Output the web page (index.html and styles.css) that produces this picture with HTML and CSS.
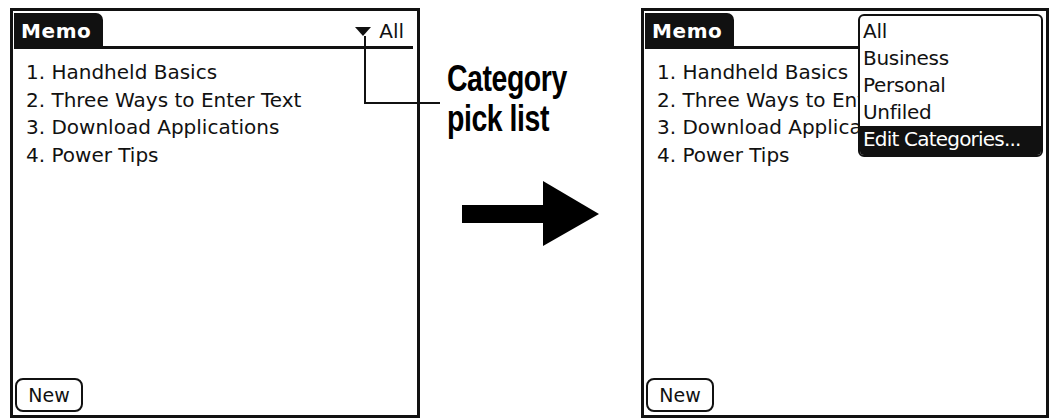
FILE: index.html
```html
<!DOCTYPE html>
<html lang="en">
<head>
<meta charset="utf-8">
<title>Memo category pick list</title>
<link rel="stylesheet" href="styles.css">
</head>
<body>
<div class="stage">
  <section class="screen screen-left">
    <header class="titlebar">
      <div class="tab">Memo</div>
      <div class="cat">
        <svg class="tri" width="16" height="9" viewBox="0 0 16 9"><polygon points="0,0 16,0 8,9"/></svg>
        <span>All</span>
      </div>
    </header>
    <ul class="memos">
      <li>1. Handheld Basics</li>
      <li>2. Three Ways to Enter Text</li>
      <li>3. Download Applications</li>
      <li>4. Power Tips</li>
    </ul>
    <div class="actions"><button class="btn">New</button></div>
  </section>

  <div class="middle">
    <p class="callout"><span class="callout-line">Category</span><span class="callout-line">pick list</span></p>
    <svg class="arrow" width="137" height="65" viewBox="0 0 137 65"><rect x="0" y="24" width="82" height="18"/><polygon points="81,0 137,33 81,65"/></svg>
  </div>

  <section class="screen screen-right">
    <header class="titlebar">
      <div class="tab">Memo</div>
    </header>
    <ul class="memos">
      <li>1. Handheld Basics</li>
      <li>2. Three Ways to Enter Text</li>
      <li>3. Download Applications</li>
      <li>4. Power Tips</li>
    </ul>
    <div class="actions"><button class="btn">New</button></div>
    <ul class="menu">
      <li>All</li>
      <li>Business</li>
      <li>Personal</li>
      <li>Unfiled</li>
      <li class="edit">Edit Categories...</li>
    </ul>
  </section>

  <div class="leader"></div>
</div>
</body>
</html>
```
FILE: styles.css
```css
* { box-sizing: border-box; }

body {
  margin: 0;
  background: #fff;
  font-family: "DejaVu Sans", "Noto Sans", sans-serif;
  color: #111;
}

.stage {
  position: relative;
  display: flex;
  align-items: flex-start;
  width: 1054px;
  height: 420px;
  padding: 8px 0 0 10px;
  overflow: hidden;
}

.screen {
  position: relative;
  display: flex;
  flex-direction: column;
  height: 410px;
  border: 3px solid #111;
  background: #fff;
}

.screen-left { width: 410px; }
.screen-right { width: 408px; }

.titlebar {
  display: flex;
  align-items: flex-start;
  height: 36px;
  margin: 2px 4px 0 1px;
  border-bottom: 3px solid #111;
}

.tab {
  width: 89px;
  height: 33px;
  padding: 4px 0 0 7px;
  background: #111;
  color: #fff;
  font-weight: bold;
  font-size: 20px;
  line-height: 28px;
  letter-spacing: 0.6px;
  border-top-right-radius: 7px;
}

.cat {
  display: flex;
  align-items: center;
  gap: 8px;
  height: 20px;
  margin: 8px 9px 0 auto;
  font-size: 20px;
  line-height: 20px;
}

.tri { fill: #111; display: block; }

.memos {
  flex: 1;
  list-style: none;
  margin: 0;
  padding: 10px 0 0 13px;
  font-size: 20px;
  line-height: 27.7px;
  white-space: nowrap;
}

.actions { padding: 0 0 3px 2px; }

.btn {
  width: 68px;
  height: 34px;
  padding: 0;
  border: 2px solid #111;
  border-radius: 8px;
  background: #fff;
  color: #111;
  font-family: "DejaVu Sans", sans-serif;
  font-size: 19px;
  line-height: 30px;
}

.middle {
  display: flex;
  flex-direction: column;
  width: 221px;
  padding: 51px 0 0 27px;
}

.callout {
  margin: 0;
  font-family: "Liberation Sans", "Arial", sans-serif;
  font-weight: bold;
  font-size: 37px;
  line-height: 40px;
  letter-spacing: -0.6px;
  color: #000;
}

.callout-line {
  display: block;
  width: max-content;
  transform: scaleX(0.77);
  transform-origin: left center;
}

.arrow {
  display: block;
  margin: 42px 0 0 15px;
  fill: #000;
}

.leader {
  position: absolute;
  left: 364px;
  top: 36px;
  width: 76px;
  height: 68px;
  border-left: 2px solid #111;
  border-bottom: 2px solid #111;
}

.menu {
  position: absolute;
  left: 214px;
  top: 3px;
  width: 185px;
  height: 143px;
  list-style: none;
  margin: 0;
  padding: 2px 0 0;
  border: 2px solid #111;
  border-radius: 6px;
  background: #fff;
  overflow: hidden;
  font-size: 20px;
  line-height: 27px;
  letter-spacing: -0.3px;
}

.menu li {
  padding-left: 3px;
  white-space: nowrap;
}

.menu .edit {
  height: 29px;
  background: #111;
  color: #fff;
  letter-spacing: -0.8px;
}
```
